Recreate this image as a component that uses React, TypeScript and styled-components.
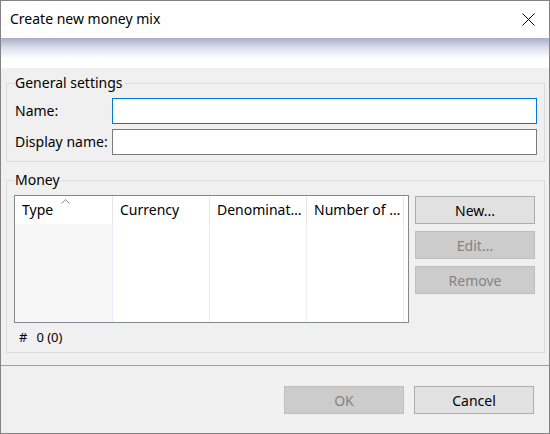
import React from "react";
import styled, { createGlobalStyle } from "styled-components";

const Global = createGlobalStyle`
  html, body { margin: 0; padding: 0; background: #f0f0f0; }
  body { font-family: "Noto Sans", "Open Sans", sans-serif; font-size: 14px; color: #000; }
  * { box-sizing: border-box; }
`;

const Window = styled.div`
  width: 550px;
  height: 434px;
  border: 1px solid #838383;
  display: flex;
  flex-direction: column;
  background: #f0f0f0;
  overflow: hidden;
`;

const TitleBar = styled.div`
  height: 37px;
  background: #ffffff;
  display: flex;
  align-items: center;
  justify-content: space-between;
  padding: 0 14px 0 9px;
  font-size: 14px;
`;

const Title = styled.span`
  line-height: 20px;
  margin-top: -2px;
`;

const CloseIcon = styled.svg`
  width: 13px;
  height: 13px;
  margin-top: -1px;
`;

const Banner = styled.div`
  height: 30px;
  background: linear-gradient(to bottom, #a6adc6 0%, #d9dce8 30%, #ffffff 68%, #ffffff 100%);
`;

const Body = styled.div`
  flex: 1;
  padding: 6px 4px 0 5px;
  display: flex;
  flex-direction: column;
`;

const Group = styled.fieldset<{ $gapTop?: number; $padRight: number }>`
  margin: ${(p) => p.$gapTop ?? 0}px 0 0 0;
  min-width: 0;
  border: 1px solid #dcdcdc;
  padding: 6px ${(p) => p.$padRight}px 6px 7px;
`;

const Legend = styled.legend`
  padding: 0 2px 0 1px;
  line-height: 18px;
  height: 18px;
`;

const FormGrid = styled.div`
  display: grid;
  grid-template-columns: 98px 1fr;
  row-gap: 5px;
  align-items: center;
`;

const Label = styled.label`
  padding-left: 1px;
  line-height: 18px;
  white-space: nowrap;
`;

const TextInput = styled.input<{ $focused?: boolean }>`
  height: 26px;
  width: 100%;
  border: 1px solid ${(p) => (p.$focused ? "#0078d7" : "#7a7a7a")};
  background: #fff;
  outline: none;
  padding: 0 3px;
  font: inherit;
`;

const MoneyRow = styled.div`
  display: flex;
  gap: 6px;
`;

const ListView = styled.div`
  width: 395px;
  height: 128px;
  border: 1px solid #828790;
  background: #fff;
  display: flex;
`;

const Column = styled.div<{ $width: number; $sorted?: boolean }>`
  width: ${(p) => p.$width}px;
  display: flex;
  flex-direction: column;
  position: relative;
  & > div:last-child {
    background: ${(p) => (p.$sorted ? "#f7f7f7" : "#ffffff")};
  }
`;

const HeaderCell = styled.div`
  height: 28px;
  line-height: 28px;
  padding-left: 7px;
  border-right: 1px solid #e5e5e5;
  white-space: nowrap;
  overflow: hidden;
`;

const ColumnBody = styled.div`
  flex: 1;
  border-right: 1px solid #e5edf8;
`;

const SortArrow = styled.svg`
  position: absolute;
  top: 3px;
  left: 46px;
  width: 9px;
  height: 5px;
`;

const ButtonColumn = styled.div`
  display: flex;
  flex-direction: column;
  gap: 7px;
  padding-top: 1px;
`;

const Button = styled.button<{ $disabled?: boolean }>`
  width: 120px;
  height: 28px;
  font: inherit;
  font-size: 14px;
  padding: 0;
  background: ${(p) => (p.$disabled ? "#cccccc" : "#e1e1e1")};
  border: 1px solid ${(p) => (p.$disabled ? "#bfbfbf" : "#adadad")};
  color: ${(p) => (p.$disabled ? "#838383" : "#000")};
`;

const Status = styled.div`
  margin-top: 5px;
  padding-left: 5px;
  line-height: 18px;
  height: 18px;
  display: flex;
  gap: 9px;
  font-size: 13px;
`;

const Separator = styled.div`
  height: 1px;
  background: #a0a0a0;
`;

const Footer = styled.div`
  height: 67px;
  display: flex;
  justify-content: flex-end;
  align-items: flex-start;
  gap: 10px;
  padding: 20px 15px 0 0;
`;

const columns = [
  { title: "Type", width: 98, sorted: true },
  { title: "Currency", width: 97 },
  { title: "Denominat…", width: 97 },
  { title: "Number of …", width: 97 },
];

export default function App() {
  return (
    <>
      <Global />
      <Window>
        <TitleBar>
          <Title>Create new money mix</Title>
          <CloseIcon viewBox="0 0 13 13">
            <path d="M0.5 0.5 L12.5 12.5 M12.5 0.5 L0.5 12.5" stroke="#000" strokeWidth="1" fill="none" />
          </CloseIcon>
        </TitleBar>
        <Banner />
        <Body>
          <Group $padRight={7}>
            <Legend>General settings</Legend>
            <FormGrid>
              <Label>Name:</Label>
              <TextInput $focused />
              <Label>Display name:</Label>
              <TextInput />
            </FormGrid>
          </Group>
          <Group $gapTop={9} $padRight={9}>
            <Legend>Money</Legend>
            <MoneyRow>
              <ListView>
                {columns.map((c) => (
                  <Column key={c.title} $width={c.width} $sorted={c.sorted}>
                    <HeaderCell>{c.title}</HeaderCell>
                    {c.sorted && (
                      <SortArrow viewBox="0 0 9 5">
                        <path d="M0.5 4.5 L4.5 0.5 L8.5 4.5" stroke="#8a8a8a" strokeWidth="1" fill="none" />
                      </SortArrow>
                    )}
                    <ColumnBody />
                  </Column>
                ))}
              </ListView>
              <ButtonColumn>
                <Button>New...</Button>
                <Button $disabled>Edit...</Button>
                <Button $disabled>Remove</Button>
              </ButtonColumn>
            </MoneyRow>
            <Status>
              <span>#</span>
              <span>0 (0)</span>
            </Status>
          </Group>
        </Body>
        <Separator />
        <Footer>
          <Button $disabled>OK</Button>
          <Button>Cancel</Button>
        </Footer>
      </Window>
    </>
  );
}
